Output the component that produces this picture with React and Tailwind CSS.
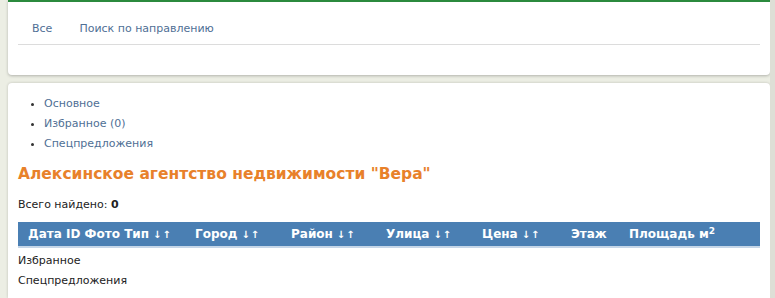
export default function App() {
  const cols = [
    { label: "Дата ID Фото Тип", sort: true, w: "w-[167px]" },
    { label: "Город", sort: true, w: "w-[96px]" },
    { label: "Район", sort: true, w: "w-[95px]" },
    { label: "Улица", sort: true, w: "w-[96px]" },
    { label: "Цена", sort: true, w: "w-[89px]" },
    { label: "Этаж", sort: false, w: "w-[58px]" },
  ];

  return (
    <div className="h-[298px] w-[775px] overflow-hidden bg-[#eceee4] font-['DejaVu_Sans',sans-serif] text-[11px]">
      <div className="flex h-full">
        <div className="flex w-[770px] flex-col gap-[8px] pl-[8px]">
          <div className="h-[75px] rounded-b-[4px] border-t-2 border-[#2b8a3e] bg-white px-[10px] shadow-[0_1px_3px_rgba(0,0,0,0.25)]">
            <div className="flex h-[43px] items-center gap-[27px] border-b border-[#dcdcdc] pl-[14px] pt-[13px] text-[#4f6f95]">
              <span>Все</span>
              <span>Поиск по направлению</span>
            </div>
          </div>

          <div className="flex-1 rounded-t-[4px] bg-white px-[10px] pt-[11px] shadow-[0_0_3px_rgba(0,0,0,0.2)]">
            <ul className="ml-[12px] list-disc pl-[14px] leading-[20px] text-[#4f6f95] marker:text-[#333]">
              <li>Основное</li>
              <li>Избранное (0)</li>
              <li>Спецпредложения</li>
            </ul>
            <h1 className="mt-[9px] text-[15.5px] font-bold leading-[22px] text-[#e8812a]">
              Алексинское агентство недвижимости "Вера"
            </h1>
            <div className="mt-[12px] leading-[16px] text-[#222]">
              Всего найдено: <b>0</b>
            </div>
            <div className="mt-[9px] flex h-[26px] items-center border-b-2 border-[#c5d6e8] bg-[#4a7fb3] pl-[10px] text-[12px] font-bold text-white">
              {cols.map((c) => (
                <div key={c.label} className={`${c.w} shrink-0 whitespace-nowrap`}>
                  {c.label}
                  {c.sort && <span className="ml-[4px] text-[10px] tracking-[1px]">↓↑</span>}
                </div>
              ))}
              <div className="whitespace-nowrap">
                Площадь м<sup className="text-[9px]">2</sup>
              </div>
            </div>
            <div className="leading-[20px] text-[#222]">
              <div className="pt-[3px]">Избранное</div>
              <div>Спецпредложения</div>
            </div>
          </div>
        </div>
        <div className="w-[5px] bg-[#dedfd6]" />
      </div>
    </div>
  );
}
